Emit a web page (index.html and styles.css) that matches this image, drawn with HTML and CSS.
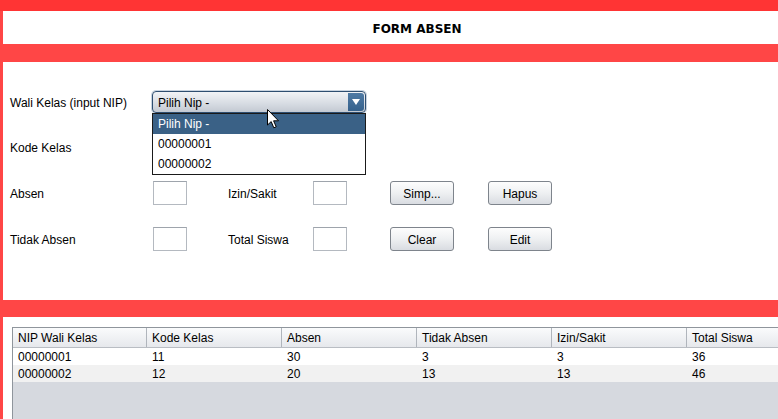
FILE: index.html
```html
<!DOCTYPE html>
<html>
<head>
<meta charset="utf-8">
<link rel="stylesheet" href="styles.css">
</head>
<body>
<div class="app">
  <div class="topstrip"></div>
  <div class="main">
    <div class="header"><span class="title">FORM ABSEN</span></div>
    <div class="form">
      <div class="row row1">
        <span class="label">Wali Kelas (input NIP)</span>
        <div class="combo">
          <span class="combo-text">Pilih Nip -</span>
          <span class="combo-btn"><svg width="8" height="6" viewBox="0 0 8 6"><path d="M0 0 H8 L4 6 Z" fill="#fff"/></svg></span>
          <ul class="dropdown">
            <li class="sel">Pilih Nip -</li>
            <li>00000001</li>
            <li>00000002</li>
          </ul>
        </div>
      </div>
      <div class="row row2">
        <span class="label">Kode Kelas</span>
      </div>
      <div class="grid row3">
        <span class="label">Absen</span>
        <span class="field"></span>
        <span></span>
        <span class="label">Izin/Sakit</span>
        <span class="field"></span>
        <span></span>
        <span class="btn">Simp...</span>
        <span></span>
        <span class="btn">Hapus</span>
      </div>
      <div class="grid row4">
        <span class="label">Tidak Absen</span>
        <span class="field"></span>
        <span></span>
        <span class="label">Total Siswa</span>
        <span class="field"></span>
        <span></span>
        <span class="btn">Clear</span>
        <span></span>
        <span class="btn">Edit</span>
      </div>
      <svg class="cursor" width="13" height="20" viewBox="0 0 13 20"><path d="M0.5 0.5 L0.5 16 L4.2 12.6 L6.8 18.8 L9.2 17.8 L6.6 11.8 L11.5 11.8 Z" fill="#fff" stroke="#000" stroke-width="1"/></svg>
    </div>
    <div class="tablepanel">
      <div class="table">
        <div class="thead">
          <div class="c">NIP Wali Kelas</div>
          <div class="c">Kode Kelas</div>
          <div class="c">Absen</div>
          <div class="c">Tidak Absen</div>
          <div class="c">Izin/Sakit</div>
          <div class="c">Total Siswa</div>
        </div>
        <div class="tr">
          <div class="c">00000001</div>
          <div class="c">11</div>
          <div class="c">30</div>
          <div class="c">3</div>
          <div class="c">3</div>
          <div class="c">36</div>
        </div>
        <div class="tr alt">
          <div class="c">00000002</div>
          <div class="c">12</div>
          <div class="c">20</div>
          <div class="c">13</div>
          <div class="c">13</div>
          <div class="c">46</div>
        </div>
        <div class="empty"></div>
      </div>
    </div>
  </div>
</div>
</body>
</html>
```

FILE: styles.css
```css
* { box-sizing: border-box; }
html, body { margin: 0; padding: 0; }
body {
  width: 778px;
  height: 419px;
  overflow: hidden;
  background: #ff4646;
  font-family: "Liberation Sans", Arial, sans-serif;
  font-size: 12px;
  color: #000;
}
.app { display: flex; flex-direction: column; height: 419px; }
.topstrip { height: 11px; background: #ff3434; flex: none; }
.main { padding-left: 3px; display: flex; flex-direction: column; flex: 1; min-height: 0; }
.header {
  height: 33px;
  background: #fff;
  display: flex;
  align-items: center;
  justify-content: center;
  flex: none;
}
.title {
  font-family: "DejaVu Sans", sans-serif;
  font-weight: bold;
  font-size: 12px;
  margin-left: 53px;
  margin-top: 2px;
}
.form {
  margin-top: 18px;
  height: 238px;
  background: #fff;
  flex: none;
  position: relative;
  padding: 29px 0 0 7px;
}
.label { padding-top: 1px; }
.row { display: flex; align-items: center; }
.row1 { height: 22px; }
.row1 .label { width: 142px; }
.row2 { height: 22px; margin-top: 23px; }
.grid {
  display: grid;
  grid-template-columns: 143px 34px 41px 85px 34px 43px 64px 34px 64px;
  height: 24px;
  align-items: center;
}
.row3 { margin-top: 23px; }
.row4 { margin-top: 22px; }
.field {
  height: 24px;
  border: 1px solid #b4b9c0;
  border-top-color: #9ea4ac;
  background: #fff;
}
.btn {
  height: 24px;
  padding-top: 1px;
  border: 1px solid #7e848c;
  border-radius: 3px;
  background: linear-gradient(#fdfdfd, #eef0f2 50%, #d9dce1);
  display: flex;
  align-items: center;
  justify-content: center;
}
.combo {
  position: relative;
  width: 214px;
  height: 22px;
  border: 1px solid #2e4e70;
  border-radius: 4px;
  background: linear-gradient(#f1f3f6, #d6dbe2 60%, #c3c9d2);
  display: flex;
  align-items: center;
  box-shadow: 0 0 0 1px #c9d4e0;
}
.combo-text { flex: 1; padding-left: 5px; padding-top: 1px; }
.combo-btn {
  width: 16px;
  height: 18px;
  margin-right: 1px;
  border-radius: 0 3px 3px 0;
  background: linear-gradient(#4f7aa4, #35618c);
  display: flex;
  align-items: center;
  justify-content: center;
}
.dropdown {
  position: absolute;
  left: -1px;
  top: 21px;
  width: 214px;
  margin: 0;
  padding: 0;
  list-style: none;
  border: 1px solid #1a1a1a;
  background: #fff;
  z-index: 2;
}
.dropdown li { height: 20px; line-height: 19px; padding: 1px 0 0 5px; }
.dropdown li.sel { background: #3a6186; color: #fff; }
.cursor { position: absolute; left: 264px; top: 47px; z-index: 3; }
.tablepanel {
  margin-top: 17px;
  background: #fff;
  flex: 1;
  min-height: 0;
  padding: 10px 0 0 9px;
  display: flex;
}
.table {
  flex: 1;
  display: flex;
  flex-direction: column;
  border-left: 1px solid #8f959c;
  border-top: 1px solid #8f959c;
  background: #d6d9df;
  overflow: hidden;
}
.thead, .tr { display: flex; flex: none; }
.thead .c, .tr .c { width: 135px; flex: none; padding-left: 5px; white-space: nowrap; }
.thead {
  height: 20px;
  background: linear-gradient(#fafbfc, #e6e8ec);
  border-bottom: 1px solid #b9bdc3;
}
.thead .c {
  line-height: 19px;
  padding-top: 1px;
  border-right: 1px solid #b0b5bc;
}
.thead .c:first-child { width: 134px; }
.tr { height: 17px; line-height: 16px; background: #fff; }
.tr .c { padding-top: 1px; }
.tr.alt { background: #f1f1f1; }
.tr .c:first-child { width: 134px; }
.empty { flex: 1; }
```
